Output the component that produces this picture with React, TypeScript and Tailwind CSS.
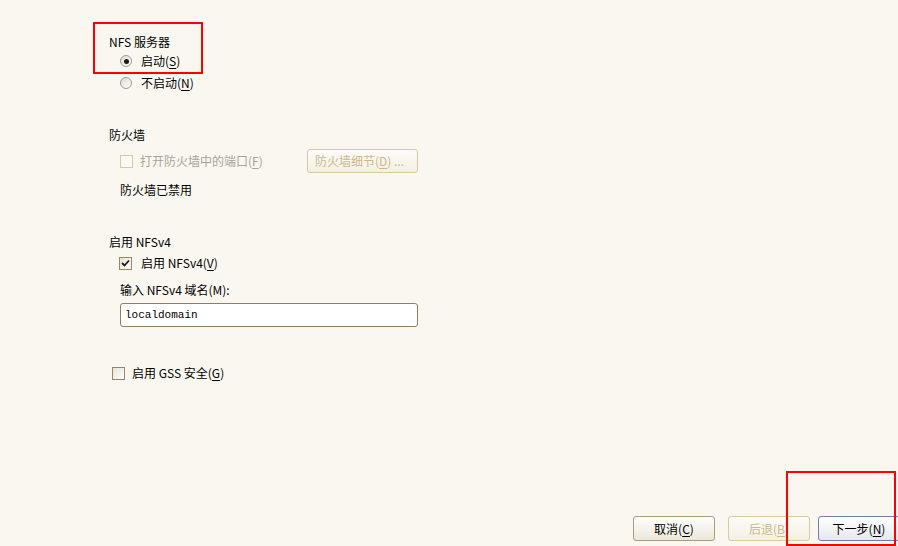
const font = "font-['Noto_Sans_CJK_SC','Noto_Sans',sans-serif]";

function Key({ k }: { k: string }) {
	return (
		<span>
			(<span className="underline underline-offset-2">{k}</span>)
		</span>
	);
}

function Radio({ checked }: { checked?: boolean }) {
	return (
		<span className="w-[12px] h-[12px] shrink-0 rounded-full border border-[#a09a8c] bg-gradient-to-br from-[#dedbd2] to-white flex items-center justify-center">
			{checked && <span className="w-[5px] h-[5px] rounded-full bg-[#1a1a1a]" />}
		</span>
	);
}

function Check({ checked, disabled }: { checked?: boolean; disabled?: boolean }) {
	return (
		<span
			className={`w-[13px] h-[13px] shrink-0 border flex items-center justify-center ${
				disabled
					? "border-[#d8c99f] bg-[#fbf9f3]"
					: "border-[#9c865a] bg-gradient-to-br from-[#e6e2d6] to-white"
			}`}
		>
			{checked && (
				<svg width="9" height="9" viewBox="0 0 9 9">
					<polyline points="1,4 3.5,6.5 8,1.5" fill="none" stroke="#1c1c1c" strokeWidth="1.8" />
				</svg>
			)}
		</span>
	);
}

export default function App() {
	return (
		<div className={`relative w-[898px] h-[546px] overflow-hidden bg-[#faf7f0] text-[12px] leading-4 text-black ${font} flex flex-col`}>
			<div className="pl-[109px]">
				{/* NFS server */}
				<div className="mt-[34px] h-4">NFS 服务器</div>
				<div className="mt-[3px] h-4 pl-[11px] flex items-center gap-[9px]">
					<Radio checked />
					<span>启动<Key k="S" /></span>
				</div>
				<div className="mt-[6px] h-4 pl-[11px] flex items-center gap-[9px]">
					<Radio />
					<span>不启动<Key k="N" /></span>
				</div>

				{/* Firewall */}
				<div className="mt-[36px] h-4">防火墙</div>
				<div className="mt-[6px] h-[24px] pl-[11px] flex items-center">
					<Check disabled />
					<span className="ml-[7px] w-[167px] text-[#a8a499]">打开防火墙中的端口<Key k="F" /></span>
					<button className="w-[111px] h-[24px] rounded-[3px] border border-[#dac9a0] bg-gradient-to-b from-[#fdfcf8] to-[#f3efe2] text-[#cbb88e] text-left pl-[7px]">
						防火墙细节<Key k="D" /> ...
					</button>
				</div>
				<div className="mt-[9px] h-4 pl-[11px]">防火墙已禁用</div>

				{/* NFSv4 */}
				<div className="mt-[36px] h-4">启用 NFSv4</div>
				<div className="mt-[5px] h-4 pl-[10px] flex items-center gap-[9px]">
					<Check checked />
					<span>启用 NFSv4<Key k="V" /></span>
				</div>
				<div className="mt-[11px] h-4 pl-[11px]">输入 NFSv4 域名(M):</div>
				<div className="mt-[5px] pl-[11px]">
					<div className="w-[298px] h-[24px] rounded-[3px] border border-[#8f8059] bg-white flex items-center pl-[4px] font-['Liberation_Mono',monospace] text-[11px]">
						localdomain
					</div>
				</div>

				{/* GSS */}
				<div className="mt-[38px] h-4 pl-[3px] flex items-center gap-[7px]">
					<Check />
					<span>启用 GSS 安全<Key k="G" /></span>
				</div>
			</div>

			{/* Footer buttons */}
			<div className="mt-auto mb-[5px] pl-[633px] flex">
				<button className="shrink-0 w-[82px] h-[25px] rounded-[3px] border border-[#a99b7c] bg-gradient-to-b from-white to-[#ece7d8] text-black">
					取消<Key k="C" />
				</button>
				<button className="shrink-0 ml-[13px] w-[82px] h-[25px] rounded-[3px] border border-[#dccba2] bg-gradient-to-b from-[#fdfcf8] to-[#f3efe2] text-[#cbb88e]">
					后退<Key k="B" />
				</button>
				<button className="shrink-0 ml-[8px] w-[82px] h-[25px] rounded-[3px] border border-[#6f82a3] bg-gradient-to-b from-white to-[#e5e8ee] text-black">
					下一步<Key k="N" />
				</button>
			</div>

			{/* annotation boxes */}
			<div className="absolute left-[93px] top-[22px] w-[110px] h-[52px] border-2 border-[#ff0000]" />
			<div className="absolute left-[786px] top-[471px] w-[110px] h-[75px] border-2 border-[#ff0000]" />
		</div>
	);
}
